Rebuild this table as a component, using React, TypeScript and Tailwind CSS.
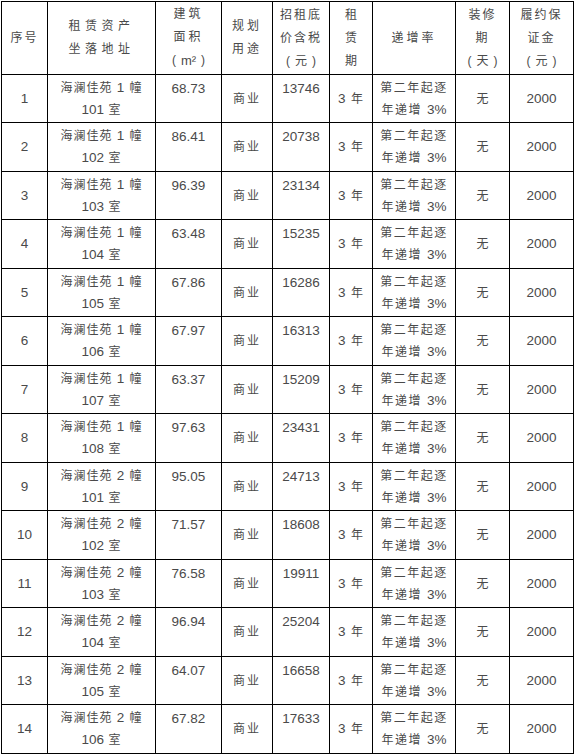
import React from "react";

const rows: [string, string, string, string, string][] = [
  ["1", "1", "101", "68.73", "13746"],
  ["2", "1", "102", "86.41", "20738"],
  ["3", "1", "103", "96.39", "23134"],
  ["4", "1", "104", "63.48", "15235"],
  ["5", "1", "105", "67.86", "16286"],
  ["6", "1", "106", "67.97", "16313"],
  ["7", "1", "107", "63.37", "15209"],
  ["8", "1", "108", "97.63", "23431"],
  ["9", "2", "101", "95.05", "24713"],
  ["10", "2", "102", "71.57", "18608"],
  ["11", "2", "103", "76.58", "19911"],
  ["12", "2", "104", "96.94", "25204"],
  ["13", "2", "105", "64.07", "16658"],
  ["14", "2", "106", "67.82", "17633"],
];

const cell = "border border-black text-center align-middle p-0";

function Paren({ children }: { children: React.ReactNode }) {
  return (
    <div className="tracking-normal flex justify-center gap-[5px]">
      <span>(</span>
      <span>{children}</span>
      <span>)</span>
    </div>
  );
}

export default function App() {
  return (
    <div
      className="w-[576px] h-[756px] bg-white overflow-hidden pt-px pl-px text-[#4a4a4a]"
      style={{ fontFamily: '"Liberation Sans", "Noto Sans CJK SC", sans-serif' }}
    >
      <table className="border-collapse table-fixed w-[572px] text-[12px] leading-[23px]">
        <colgroup>
          <col className="w-[46px]" />
          <col className="w-[108px]" />
          <col className="w-[66px]" />
          <col className="w-[51px]" />
          <col className="w-[57px]" />
          <col className="w-[43px]" />
          <col className="w-[83px]" />
          <col className="w-[54px]" />
          <col className="w-[64px]" />
        </colgroup>
        <thead>
          <tr className="h-[73px]">
            <th className={`${cell} font-normal tracking-[2px]`}>序号</th>
            <th className={`${cell} font-normal tracking-[4.5px]`}>
              <div>租赁资产</div>
              <div>坐落地址</div>
            </th>
            <th className={`${cell} font-normal tracking-[3px]`}>
              <div>建筑</div>
              <div>面积</div>
              <Paren>
                <span className="text-[13px]">m²</span>
              </Paren>
            </th>
            <th className={`${cell} font-normal tracking-[3px]`}>
              <div>规划</div>
              <div>用途</div>
            </th>
            <th className={`${cell} font-normal tracking-[2px]`}>
              <div>招租底</div>
              <div>价含税</div>
              <Paren>元</Paren>
            </th>
            <th className={`${cell} font-normal`}>
              <div>租</div>
              <div>赁</div>
              <div>期</div>
            </th>
            <th className={`${cell} font-normal tracking-[3px]`}>递增率</th>
            <th className={`${cell} font-normal tracking-[2px]`}>
              <div>装修</div>
              <div>期</div>
              <Paren>天</Paren>
            </th>
            <th className={`${cell} font-normal tracking-[2px]`}>
              <div>履约保</div>
              <div>证金</div>
              <Paren>元</Paren>
            </th>
          </tr>
        </thead>
        <tbody className="leading-[22px]">
          {rows.map(([no, bldg, room, area, price], i) => (
            <tr key={no} className={i % 2 === 0 ? "h-[48px]" : "h-[49px]"}>
              <td className={`${cell} text-[13.5px]`}>{no}</td>
              <td className={`${cell} tracking-[1px]`}>
                <div>
                  海澜佳苑 <span className="text-[13.5px]">{bldg}</span> 幢
                </div>
                <div>
                  <span className="text-[13.5px] tracking-normal">{room}</span> 室
                </div>
              </td>
              <td className={`${cell} text-[13.5px] pb-[20px]`}>{area}</td>
              <td className={`${cell} tracking-[2px]`}>商业</td>
              <td className={`${cell} text-[13.5px] pb-[20px]`}>{price}</td>
              <td className={`${cell} tracking-[1px]`}>
                <span className="text-[13.5px]">3</span> 年
              </td>
              <td className={`${cell} tracking-[1.5px]`}>
                <div>第二年起逐</div>
                <div>
                  年递增 <span className="text-[13.5px] tracking-normal">3%</span>
                </div>
              </td>
              <td className={cell}>无</td>
              <td className={`${cell} text-[13.5px]`}>2000</td>
            </tr>
          ))}
        </tbody>
      </table>
    </div>
  );
}
